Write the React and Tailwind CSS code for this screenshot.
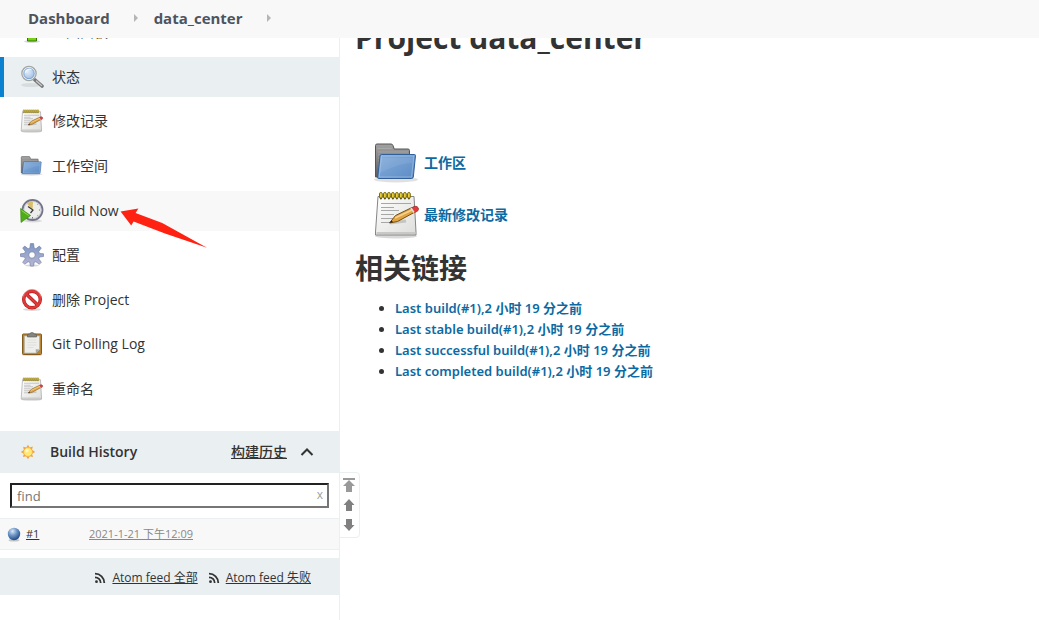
const sansStack = "font-['Open_Sans','Noto_Sans_CJK_SC',sans-serif]";

function MagnifierIcon() {
  return (
    <svg className="size-6" viewBox="0 0 24 24" aria-hidden="true">
      <defs>
        <radialGradient id="lens" cx="0.4" cy="0.35" r="0.7">
          <stop offset="0" stopColor="#e4effa" />
          <stop offset="1" stopColor="#8fb4dd" />
        </radialGradient>
      </defs>
      <ellipse cx="11" cy="20" rx="10" ry="2" fill="#000" opacity="0.08" />
      <path d="M15 15l7 6" stroke="#777" strokeWidth="3.6" strokeLinecap="round" />
      <path d="M16.5 16l5 4.5" stroke="#c9c9c9" strokeWidth="1.4" strokeLinecap="round" />
      <circle cx="9" cy="8.500" r="7" fill="url(#lens)" stroke="#a3a6a3" strokeWidth="1.600" />
      <circle cx="9" cy="8.500" r="6" fill="none" stroke="#f2f4f6" strokeWidth="1" />
      <circle cx="9" cy="8.500" r="5.200" fill="none" stroke="#6d93c4" strokeWidth="0.700" />
      <path d="M5.500 8c0-3 3-4.500 6-3.500" stroke="#fff" strokeWidth="1.200" fill="none" opacity="0.800" />
    </svg>
  );
}

function NotepadIcon({ className = 'size-6' }) {
  return (
    <svg className={className} viewBox="0 0 48 48" aria-hidden="true">
      <defs>
        <linearGradient id="paper" x1="0" y1="0" x2="1" y2="1">
          <stop offset="0" stopColor="#ffffff" />
          <stop offset="1" stopColor="#dddddb" />
        </linearGradient>
      </defs>
      <ellipse cx="23" cy="45" rx="21" ry="2.500" fill="#000" opacity="0.15" />
      <path
        d="M5 5.500h36l2 35.500v3H2.500v-3z"
        fill="url(#paper)"
        stroke="#858585"
        strokeLinejoin="round"
      />
      <path d="M3.500 41h39v2h-39z" fill="#c8c8c6" />
      {[6, 10, 14, 18, 22, 26, 30, 34].map((x) => (
        <g key={x}>
          <rect x={x + 0.5} y="1.500" width="2.800" height="6" rx="1.400" fill="#e8cf3c" stroke="#7d6a08" />
          <circle cx={x + 1.9} cy="7.500" r="0.900" fill="#55520f" />
        </g>
      ))}
      <path
        d="M8 12.500h30M8 16.500h13M8 19.500h18M8 23.500h13M8 27.500h12M8 31.500h11"
        stroke="#a7a7a7"
        strokeWidth="1.200"
      />
      <path d="M17 32l16-2" stroke="#000" opacity="0.15" strokeWidth="3" />
      <path d="M16.500 32l6-7.500L39 16.500l3 4.500-17.500 9.500z" fill="#e1a344" stroke="#76500f" />
      <path d="M22 27l18-8.500" stroke="#f7d48c" strokeWidth="1.500" />
      <path d="M16.500 32l2-2.500 1.500 1.500z" fill="#222" />
      <path d="M38.500 17l2.500-1.500q4-.8 4.500 2.500l-.8 2-3 1.500z" fill="#e63a39" stroke="#982d29" strokeWidth="0.800" />
      <path d="M38 17l3 4.500" stroke="#ddd" strokeWidth="1.600" />
    </svg>
  );
}

function FolderIcon({ className = 'size-6' }) {
  return (
    <svg className={className} viewBox="0 0 48 48" aria-hidden="true">
      <defs>
        <linearGradient id="folder-front" x1="0" y1="0" x2="1" y2="1">
          <stop offset="0" stopColor="#86aedd" />
          <stop offset="1" stopColor="#5b8bc4" />
        </linearGradient>
        <linearGradient id="folder-back" x1="0" y1="0" x2="0" y2="1">
          <stop offset="0" stopColor="#a2a2a2" />
          <stop offset="1" stopColor="#5d5d5d" />
        </linearGradient>
      </defs>
      <ellipse cx="23" cy="40.500" rx="22" ry="3" fill="#000" opacity="0.12" />
      <path
        d="M2.500 38V6.500Q2.500 5 4 5H18q1.500 0 2 1.500l1.200 3.500H35q1.500 0 1.500 1.500V38z"
        fill="url(#folder-back)"
        stroke="#555"
      />
      <path d="M4.500 9.500h14M5 13h30M5 16h4M5 19h3M5 22h3M5 25h3M5 28h3" stroke="#bdbdbd" opacity="0.450" />
      <path
        d="M8.500 15.500h33q1 0 1 1l-2.200 21.500q-.3 1.500-1.800 1.500H5.500q-1 0-.8-1.500L7 17q.2-1.500 1.500-1.500z"
        fill="url(#folder-front)"
        stroke="#315f9a"
      />
      <path d="M8.500 17h32.300l-2.200 21H6.200z" fill="none" stroke="#b7d0ed" opacity="0.500" />
      <path d="M8 19h32l-.8 5Q26 24 7 34z" fill="#fff" opacity="0.080" />
    </svg>
  );
}

function BuildIcon() {
  return (
    <svg className="size-6" viewBox="0 0 24 24" aria-hidden="true">
      <ellipse cx="13" cy="22" rx="9" ry="1.500" fill="#000" opacity="0.12" />
      <circle cx="12.500" cy="11" r="10" fill="#ededeb" stroke="#737489" strokeWidth="1.800" />
      <circle cx="12.500" cy="11" r="8.600" fill="none" stroke="#bfc0cc" strokeWidth="0.700" />
      <path d="M12.500 11L7 4.500q3-2.500 6-1.500z" fill="#d9bd68" />
      <path d="M8 7.500l5 3.500-2.500 3" fill="none" stroke="#393939" strokeWidth="1.200" />
      <path d="M19 11h1M12.500 18v1.500M17.500 5.500l.8-.8M17.500 16.500l.8.8" stroke="#777" strokeWidth="1" />
      <path d="M.6 9.500l10 7-9.600 7z" fill="#4fae17" stroke="#38850e" strokeWidth="0.600" />
      <path d="M1.600 11.500l7 5" stroke="#91dc55" strokeWidth="1" />
    </svg>
  );
}

function GearIcon() {
  return (
    <svg className="size-6" viewBox="0 0 24 24" aria-hidden="true">
      <defs>
        <linearGradient id="gear" x1="0" y1="0" x2="0" y2="1">
          <stop offset="0" stopColor="#7a96c4" />
          <stop offset="1" stopColor="#b9b7d6" />
        </linearGradient>
      </defs>
      <ellipse cx="12" cy="22.500" rx="7" ry="1.200" fill="#000" opacity="0.15" />
      <path
        d="M10.400.6h3.200l.5 4.400 1.800.8 3.400-2.700 2 2-2.600 3.400.8 1.900 4 .4v2.700l-4 .5-.8 1.800 2.600 3.500-2 2-3.400-2.600-1.800.7-.5 3.600h-3.200L9.900 19.400l-1.800-.7-3.400 2.600-2-2 2.600-3.500-.8-1.800-4-.5v-2.700l4-.4.8-1.900-2.600-3.400 2-2 3.400 2.700 1.800-.8z"
        fill="url(#gear)"
        stroke="#7882a8"
        strokeWidth="0.700"
        strokeLinejoin="round"
      />
      <circle cx="12" cy="12" r="3.300" fill="#fff" stroke="#7580a3" strokeWidth="0.800" />
    </svg>
  );
}

function DeleteIcon() {
  return (
    <svg className="size-6" viewBox="0 0 24 24" aria-hidden="true">
      <ellipse cx="12" cy="21.500" rx="9" ry="1.500" fill="#000" opacity="0.15" />
      <circle cx="12" cy="11.500" r="8.300" fill="#fff" stroke="#b5191b" strokeWidth="3.400" />
      <path d="M6 5.800l12 11.400" stroke="#b5191b" strokeWidth="3.400" />
      <circle cx="12" cy="11.500" r="8.300" fill="none" stroke="#dd3a3a" strokeWidth="2.200" />
      <path d="M6 5.800l12 11.400" stroke="#dd3a3a" strokeWidth="2.200" />
      <path d="M3.200 8.500a9 9 0 0 1 17.600 0" fill="none" stroke="#f08c8c" strokeWidth="0.800" />
    </svg>
  );
}

function ClipboardIcon() {
  return (
    <svg className="size-6" viewBox="0 0 24 24" aria-hidden="true">
      <ellipse cx="12" cy="23" rx="10" ry="1" fill="#000" opacity="0.15" />
      <rect x="2.500" y="2" width="19" height="20.500" rx="0.800" fill="#b98534" stroke="#855b1b" />
      <path d="M4.500 4h15v13.500L16 21H4.500z" fill="#eeeeec" stroke="#b5b5ad" strokeWidth="0.600" />
      <path d="M7.500 8h9M7.500 10.500h9M7.500 13h9M7.500 15.500h6" stroke="#dadad7" strokeWidth="0.800" />
      <path d="M19.500 17.500L16 21l-.3-3.800z" fill="#a9a9a3" />
      <path d="M7.500 5V3q0-1 1.500-1h.7Q10 .5 12 .5T14.300 2h.7q1.500 0 1.500 1v2z" fill="#85857f" stroke="#55554f" strokeWidth="0.600" />
    </svg>
  );
}

function UpIcon() {
  return (
    <svg className="size-6" viewBox="0 0 24 24" aria-hidden="true">
      <ellipse cx="12" cy="21.500" rx="8" ry="1.500" fill="#000" opacity="0.15" />
      <path d="M12 2l9 9h-4.500v10h-9V11H3z" fill="#73d216" stroke="#3a7304" />
    </svg>
  );
}

function SunIcon() {
  return (
    <svg className="size-4" viewBox="0 0 16 16" aria-hidden="true">
      <path
        d="M8 .8l1.600 2.800 3.200-1-.8 3.100L15.200 8 12 9.800l1 3.300-3.300-.9L8 15.200l-1.800-3-3.300.9 1-3.300L.8 8l3.100-2-.8-3.300 3.200.9z"
        fill="#f2a33b"
      />
      <circle cx="8" cy="8" r="4.400" fill="#ffe873" stroke="#f3b24a" strokeWidth="0.700" />
      <circle cx="6.800" cy="6.600" r="1.800" fill="#fff8c7" />
    </svg>
  );
}

function BallIcon() {
  return (
    <svg className="size-4" viewBox="0 0 16 16" aria-hidden="true">
      <defs>
        <radialGradient id="ball" cx="0.38" cy="0.28" r="0.75">
          <stop offset="0" stopColor="#dce8f6" />
          <stop offset="0.45" stopColor="#6f97c8" />
          <stop offset="1" stopColor="#1e4785" />
        </radialGradient>
      </defs>
      <ellipse cx="8" cy="14.300" rx="5.500" ry="1.300" fill="#000" opacity="0.2" />
      <circle cx="8" cy="8" r="6.200" fill="url(#ball)" />
    </svg>
  );
}

function FeedIcon() {
  return (
    <svg className="size-3" viewBox="0 0 12 12" fill="none" stroke="#333" strokeWidth="1.800" aria-hidden="true">
      <circle cx="2.500" cy="9.700" r="1.400" fill="#333" stroke="none" />
      <path d="M1 5.300a5.700 5.700 0 0 1 5.700 5.700M1 1.700A9.300 9.300 0 0 1 10.300 11" />
    </svg>
  );
}

function Separator() {
  return (
    <svg className="h-2 w-1" viewBox="0 0 4 8" aria-hidden="true">
      <path d="M0 0l4 4-4 4z" fill="#b5b5b5" />
    </svg>
  );
}

function PointerArrow() {
  return (
    <svg
      className="pointer-events-none absolute top-4 left-[116px] z-10 h-[42px] w-[88px]"
      viewBox="0 0 88 42"
      aria-hidden="true"
    >
      <path d="M.6 4.400L18.400 1.600 15.600 6l26.600 10L87 40.700 45 26.500 13.600 14.400 11.200 18.400z" fill="#ff2213" />
    </svg>
  );
}

const tasks = [
  { label: '返回面板', icon: <UpIcon /> },
  { label: '状态', icon: <MagnifierIcon />, active: true },
  { label: '修改记录', icon: <NotepadIcon /> },
  { label: '工作空间', icon: <FolderIcon /> },
  { label: 'Build Now', icon: <BuildIcon />, hovered: true },
  { label: '配置', icon: <GearIcon /> },
  { label: '删除 Project', icon: <DeleteIcon /> },
  { label: 'Git Polling Log', icon: <ClipboardIcon /> },
  { label: '重命名', icon: <NotepadIcon /> }
];

const permalinks = ['Last build(#1)', 'Last stable build(#1)', 'Last successful build(#1)', 'Last completed build(#1)'];

function taskClass(task) {
  if (task.active) return 'border-[#0b82d0] bg-[#eaeff2]';
  if (task.hovered) return 'border-transparent bg-[#f8f8f8]';
  return 'border-transparent';
}

function TaskList() {
  return (
    <nav className="flex h-[397px] flex-col justify-between">
      {tasks.map((task) => (
        <a
          key={task.label}
          href="#"
          className={`relative flex h-10 items-center gap-2 border-l-4 pl-4 text-sm ${taskClass(task)}`}
        >
          {task.icon}
          {task.label}
          {task.hovered && <PointerArrow />}
        </a>
      ))}
    </nav>
  );
}

function BuildHistory() {
  return (
    <section className="relative mt-[22px]">
      <div className="flex h-[42px] items-center bg-[#eaeff2] pr-6 pl-5">
        <SunIcon />
        <h2 className="ml-[14px] text-sm font-semibold">Build History</h2>
        <a href="#" className="ml-auto text-sm font-medium underline">
          构建历史
        </a>
        <button type="button" aria-label="Collapse" className="ml-3">
          <svg className="size-4" viewBox="0 0 16 16" fill="none" stroke="#333" strokeWidth="2" aria-hidden="true">
            <path d="M2.500 11L8 5.500l5.500 5.500" />
          </svg>
        </button>
      </div>

      <div className="relative p-[10px]">
        <input
          type="text"
          placeholder="find"
          aria-label="find"
          className="block h-[25px] w-full border-2 border-t-[#222] border-r-[#767676] border-b-[#767676] border-l-[#222] bg-white px-[5px] text-[13px] placeholder:text-[#757575]"
        />
        <button type="button" className="absolute top-[10px] right-4 h-6 text-xs text-[#a0a0a0]">
          x
        </button>
      </div>

      <div className="flex h-8 items-center border-y border-[#eaeff2] bg-[#f8f8f8] pl-[6px] text-[11px]">
        <BallIcon />
        <a href="#" className="ml-1 w-[63px] underline">
          #1
        </a>
        <a href="#" className="text-[#888] underline">
          2021-1-21 下午12:09
        </a>
      </div>

      <div className="mt-2 flex h-[37px] items-center justify-end gap-[6px] bg-[#eaeff2] pt-[2px] pr-7 text-xs">
        <FeedIcon />
        <a href="#" className="mr-1 underline">
          Atom feed 全部
        </a>
        <FeedIcon />
        <a href="#" className="underline">
          Atom feed 失败
        </a>
      </div>

      <div className="absolute top-[41px] -right-[21px] flex w-[21px] flex-col items-center gap-1 rounded-r-sm border border-[#eaeff2] bg-white py-1 pr-[2px]">
        <button type="button" aria-label="Newest builds">
          <svg className="h-4 w-3" viewBox="0 0 12 16" fill="#999" aria-hidden="true">
            <path d="M0 1h12v2H0zM6 3l6 6H9v6H3V9H0z" />
          </svg>
        </button>
        <button type="button" aria-label="Newer builds">
          <svg className="h-4 w-3" viewBox="0 0 12 16" fill="#808080" aria-hidden="true">
            <path d="M6 2l5.500 6H9v6H3V8H.5z" />
          </svg>
        </button>
        <button type="button" aria-label="Older builds">
          <svg className="h-4 w-3" viewBox="0 0 12 16" fill="#808080" aria-hidden="true">
            <path d="M6 14l5.500-6H9V2H3v6H.5z" />
          </svg>
        </button>
      </div>
    </section>
  );
}

export default function App() {
  return (
    <div className={`flex h-screen flex-col bg-white text-[#333] ${sansStack}`}>
      <header className="flex h-[38px] shrink-0 items-center bg-[#f8f8f8] pb-[2px] pl-7 text-[15px] font-bold text-[#4d545d]">
        <a href="#" className="mr-6">
          Dashboard
        </a>
        <Separator />
        <a href="#" className="mr-6 ml-4">
          data_center
        </a>
        <Separator />
      </header>

      <div className="flex min-h-0 flex-1 overflow-hidden">
        {/* content is scrolled slightly under the breadcrumb bar */}
        <div className="-mt-[26px] flex flex-1">
          <aside className="w-[340px] shrink-0 border-r border-[#eaeff2]">
            <TaskList />
            <BuildHistory />
          </aside>

          <main className="min-w-0 flex-1 pt-[6px] pl-[15px]">
            <h1 className="text-[30px] leading-10 font-bold">Project data_center</h1>
            <div className="mt-[81px] flex flex-col gap-1 pl-[18px] text-sm font-bold text-[#0b6aa2]">
              <a href="#" className="flex items-center gap-[3px]">
                <FolderIcon className="size-12" />
                工作区
              </a>
              <a href="#" className="flex items-center gap-[3px]">
                <NotepadIcon className="size-12" />
                最新修改记录
              </a>
            </div>
            <h2 className="mt-[9px] text-[28px] leading-10 font-bold">相关链接</h2>
            <ul className="mt-[10px] list-disc pl-10 font-['Noto_Sans','Noto_Sans_CJK_SC',sans-serif] text-[13px] leading-[21px] font-semibold">
              {permalinks.map((name) => (
                <li key={name}>
                  <a href="#" className="text-[#0b6aa2]">
                    {name},2 小时 19 分之前
                  </a>
                </li>
              ))}
            </ul>
          </main>
        </div>
      </div>
    </div>
  );
}
